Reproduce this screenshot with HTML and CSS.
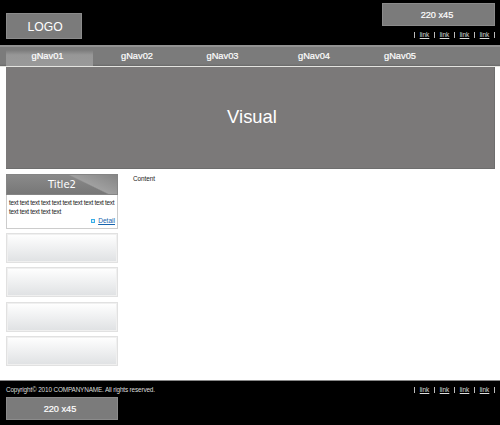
FILE: index.html
```html
<!DOCTYPE html>
<html lang="en">
<head>
<meta charset="utf-8">
<title>COMPANYNAME</title>
<link rel="stylesheet" href="styles.css">
</head>
<body>
<header class="header">
  <div class="logo">LOGO</div>
  <div class="header-side">
    <div class="banner">220 x45</div>
    <ul class="links"><li><a href="#">link</a></li><li><a href="#">link</a></li><li><a href="#">link</a></li><li><a href="#">link</a></li></ul>
  </div>
</header>
<nav class="gnav">
  <a class="current">gNav01</a><a>gNav02</a><a>gNav03</a><a>gNav04</a><a>gNav05</a>
</nav>
<div class="visual">Visual</div>
<div class="main">
  <aside class="side">
    <section class="card">
      <h2>Title2</h2>
      <p>text text text text text text text text text text<br>text text text text text</p>
      <div class="detail"><i></i><a href="#">Detail</a></div>
    </section>
    <div class="box"></div>
    <div class="box"></div>
    <div class="box"></div>
    <div class="box"></div>
  </aside>
  <main class="content">Content</main>
</div>
<footer class="footer">
  <div class="footer-row">
    <span class="copy">Copyright© 2010 COMPANYNAME. All rights reserved.</span>
    <ul class="links"><li><a href="#">link</a></li><li><a href="#">link</a></li><li><a href="#">link</a></li><li><a href="#">link</a></li></ul>
  </div>
  <div class="banner">220 x45</div>
</footer>
</body>
</html>
```
FILE: styles.css
```css
* { box-sizing: border-box; }
body {
  margin: 0;
  width: 500px;
  height: 425px;
  overflow: hidden;
  background: #fff;
  color: #222;
  font: 6.4px/10px "Liberation Sans", Arial, sans-serif;
}
.header {
  display: flex;
  justify-content: space-between;
  height: 45px;
  padding: 3px 5px 0 6px;
  background: #000;
}
.logo {
  width: 76px;
  height: 26px;
  margin-top: 10px;
  border: 1px solid #8b8b8b;
  background: #7b7b7b;
  color: #fff;
  font-size: 12.2px;
  line-height: 26px;
  text-align: center;
  padding-left: 2px;
}
.header-side {
  display: flex;
  flex-direction: column;
  align-items: flex-end;
  gap: 6px;
}
.banner {
  width: 112px;
  height: 23px;
  padding-right: 4px;
  border: 1px solid #8b8b8b;
  background: #7b7b7b;
  color: #fff;
  font-size: 9.2px;
  line-height: 23px;
  text-align: center;
  -webkit-text-stroke: .2px #fff;
}
.header .banner { width: 113px; padding-right: 3px; }
.links {
  display: flex;
  margin: 0;
  padding: 0;
  list-style: none;
  border-left: 1px solid #bbb;
  height: 6px;
  line-height: 6px;
}
.links li {
  width: 20px;
  border-right: 1px solid #bbb;
  text-align: center;
}
.links a { color: #ddd; }
.gnav {
  display: flex;
  height: 22px;
  padding-left: 6px;
  border-top: 2px solid #929292;
  border-bottom: 1px solid #e4e4e0;
  background: linear-gradient(#7b7b7b 17px, #686868);
  color: #fff;
  font-size: 9.3px;
  line-height: 19px;
  -webkit-text-stroke: .2px #fff;
}
.gnav a {
  width: 87px;
  text-align: center;
}
.gnav a:nth-child(1) { padding-right: 4px; }
.gnav a:nth-child(2) { width: 88px; }
.gnav a:nth-child(3) { width: 83px; }
.gnav a:nth-child(4) { width: 100px; }
.gnav a:nth-child(5) { width: 72px; }
.gnav .current { background: linear-gradient(#7b7b7b 3px, #979797 8px, #999); }
.visual {
  height: 102px;
  margin: 0 5px 0 6px;
  border-right: 1px solid #6e6e6e;
  border-bottom: 1px solid #6e6e6e;
  background: #7b7979;
  color: #fff;
  font-size: 18.4px;
  line-height: 100px;
  text-align: center;
  padding-left: 4px;
}
.main {
  display: flex;
  gap: 15px;
  height: 212px;
  padding: 5px 5px 0 6px;
  border-bottom: 1px solid #888;
}
.side { width: 112px; }
.card {
  height: 55px;
  margin-bottom: 4px;
  border: 1px solid #ccc;
}
.card h2 {
  height: 21px;
  margin: -1px -1px 0;
  border: 1px solid #858585;
  background: linear-gradient(26deg, transparent 67%, #a0a0a0 69%, #858585 100%), linear-gradient(#8a8a8a, #777);
  color: #fff;
  font: 10.1px/19px "DejaVu Sans", sans-serif;
  text-align: center;
}
.card p {
  margin: 3px 0 0 2px;
  line-height: 9px;
  font-size: 6.4px;
  letter-spacing: -.28px;
  white-space: nowrap;
}
.detail {
  display: flex;
  justify-content: flex-end;
  align-items: center;
  gap: 3px;
  height: 10px;
  padding-right: 2px;
}
.detail i {
  width: 4px;
  height: 4px;
  border: 1px solid #39aee8;
  background: #d4f0fc;
}
.detail a { color: #1764ad; font-size: 6.6px; }
.box {
  height: 30px;
  margin-bottom: 4.3px;
  border: 1px solid #e1e1e1;
  box-shadow: inset 0 0 0 1px #f0f0f0;
  background: linear-gradient(#fff, #dfe1e3);
}
.content { letter-spacing: -.05px; }
.footer {
  height: 44px;
  padding: 4px 5px 0 6px;
  background: #000;
  color: #ddd;
}
.footer-row {
  display: flex;
  justify-content: space-between;
  align-items: center;
  height: 10px;
  margin-bottom: 2px;
}
.copy { letter-spacing: -.15px; }
```
